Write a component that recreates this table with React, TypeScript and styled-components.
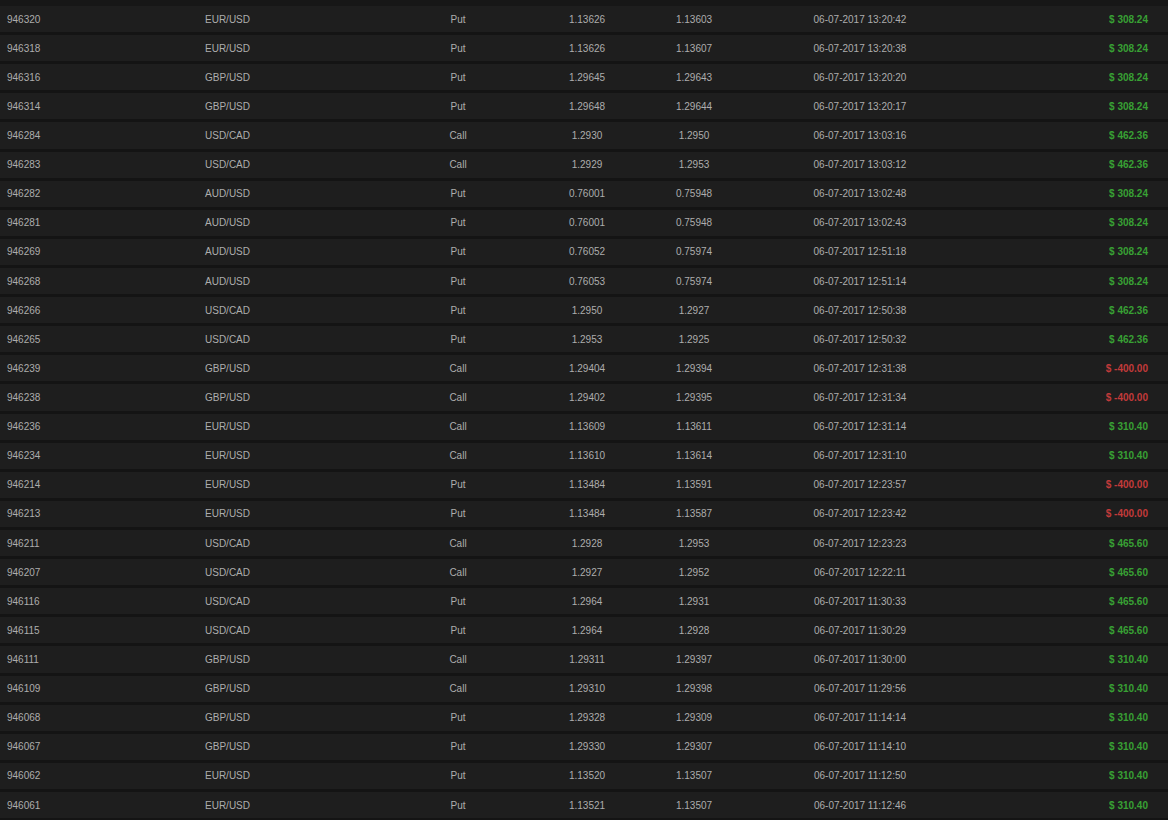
import React from "react";
import styled, { createGlobalStyle } from "styled-components";

const Global = createGlobalStyle`
  html, body { margin: 0; padding: 0; background: #171717; }
  body { font-family: "Liberation Sans", Arial, sans-serif; }
`;

type Trade = {
  id: string;
  pair: string;
  type: "Put" | "Call";
  open: string;
  close: string;
  time: string;
  amount: string;
};

const rows: Trade[] = [
  ["946320", "EUR/USD", "Put", "1.13626", "1.13603", "13:20:42", "308.24"],
  ["946318", "EUR/USD", "Put", "1.13626", "1.13607", "13:20:38", "308.24"],
  ["946316", "GBP/USD", "Put", "1.29645", "1.29643", "13:20:20", "308.24"],
  ["946314", "GBP/USD", "Put", "1.29648", "1.29644", "13:20:17", "308.24"],
  ["946284", "USD/CAD", "Call", "1.2930", "1.2950", "13:03:16", "462.36"],
  ["946283", "USD/CAD", "Call", "1.2929", "1.2953", "13:03:12", "462.36"],
  ["946282", "AUD/USD", "Put", "0.76001", "0.75948", "13:02:48", "308.24"],
  ["946281", "AUD/USD", "Put", "0.76001", "0.75948", "13:02:43", "308.24"],
  ["946269", "AUD/USD", "Put", "0.76052", "0.75974", "12:51:18", "308.24"],
  ["946268", "AUD/USD", "Put", "0.76053", "0.75974", "12:51:14", "308.24"],
  ["946266", "USD/CAD", "Put", "1.2950", "1.2927", "12:50:38", "462.36"],
  ["946265", "USD/CAD", "Put", "1.2953", "1.2925", "12:50:32", "462.36"],
  ["946239", "GBP/USD", "Call", "1.29404", "1.29394", "12:31:38", "-400.00"],
  ["946238", "GBP/USD", "Call", "1.29402", "1.29395", "12:31:34", "-400.00"],
  ["946236", "EUR/USD", "Call", "1.13609", "1.13611", "12:31:14", "310.40"],
  ["946234", "EUR/USD", "Call", "1.13610", "1.13614", "12:31:10", "310.40"],
  ["946214", "EUR/USD", "Put", "1.13484", "1.13591", "12:23:57", "-400.00"],
  ["946213", "EUR/USD", "Put", "1.13484", "1.13587", "12:23:42", "-400.00"],
  ["946211", "USD/CAD", "Call", "1.2928", "1.2953", "12:23:23", "465.60"],
  ["946207", "USD/CAD", "Call", "1.2927", "1.2952", "12:22:11", "465.60"],
  ["946116", "USD/CAD", "Put", "1.2964", "1.2931", "11:30:33", "465.60"],
  ["946115", "USD/CAD", "Put", "1.2964", "1.2928", "11:30:29", "465.60"],
  ["946111", "GBP/USD", "Call", "1.29311", "1.29397", "11:30:00", "310.40"],
  ["946109", "GBP/USD", "Call", "1.29310", "1.29398", "11:29:56", "310.40"],
  ["946068", "GBP/USD", "Put", "1.29328", "1.29309", "11:14:14", "310.40"],
  ["946067", "GBP/USD", "Put", "1.29330", "1.29307", "11:14:10", "310.40"],
  ["946062", "EUR/USD", "Put", "1.13520", "1.13507", "11:12:50", "310.40"],
  ["946061", "EUR/USD", "Put", "1.13521", "1.13507", "11:12:46", "310.40"],
].map(([id, pair, type, open, close, t, amount]) => ({
  id,
  pair,
  type: type as "Put" | "Call",
  open,
  close,
  time: `06-07-2017 ${t}`,
  amount,
}));

const Table = styled.div`
  width: 1168px;
  padding-top: 6px;
  background: #171717;
`;

const Row = styled.div`
  display: grid;
  grid-template-columns: 198px 200px 120px 138px 76px 256px 1fr;
  align-items: center;
  height: 26.12px;
  background: #1e1e1e;
  border-bottom: 3px solid #141414;
  font-size: 10px;
  color: #adadad;
`;

const Cell = styled.div<{ $align?: "left" | "center" | "right" }>`
  text-align: ${(p) => p.$align ?? "center"};
  padding-left: ${(p) => (p.$align === "left" ? "7px" : "0")};
  padding-right: ${(p) => (p.$align === "right" ? "20px" : "0")};
  white-space: nowrap;
`;

const Amount = styled(Cell)<{ $loss: boolean }>`
  color: ${(p) => (p.$loss ? "#c23a3a" : "#38a034")};
  font-weight: bold;
`;

export default function App() {
  return (
    <>
      <Global />
      <Table>
        {rows.map((r) => (
          <Row key={r.id}>
            <Cell $align="left">{r.id}</Cell>
            <Cell $align="left">{r.pair}</Cell>
            <Cell>{r.type}</Cell>
            <Cell>{r.open}</Cell>
            <Cell>{r.close}</Cell>
            <Cell>{r.time}</Cell>
            <Amount $align="right" $loss={r.amount.startsWith("-")}>
              $ {r.amount}
            </Amount>
          </Row>
        ))}
      </Table>
    </>
  );
}
